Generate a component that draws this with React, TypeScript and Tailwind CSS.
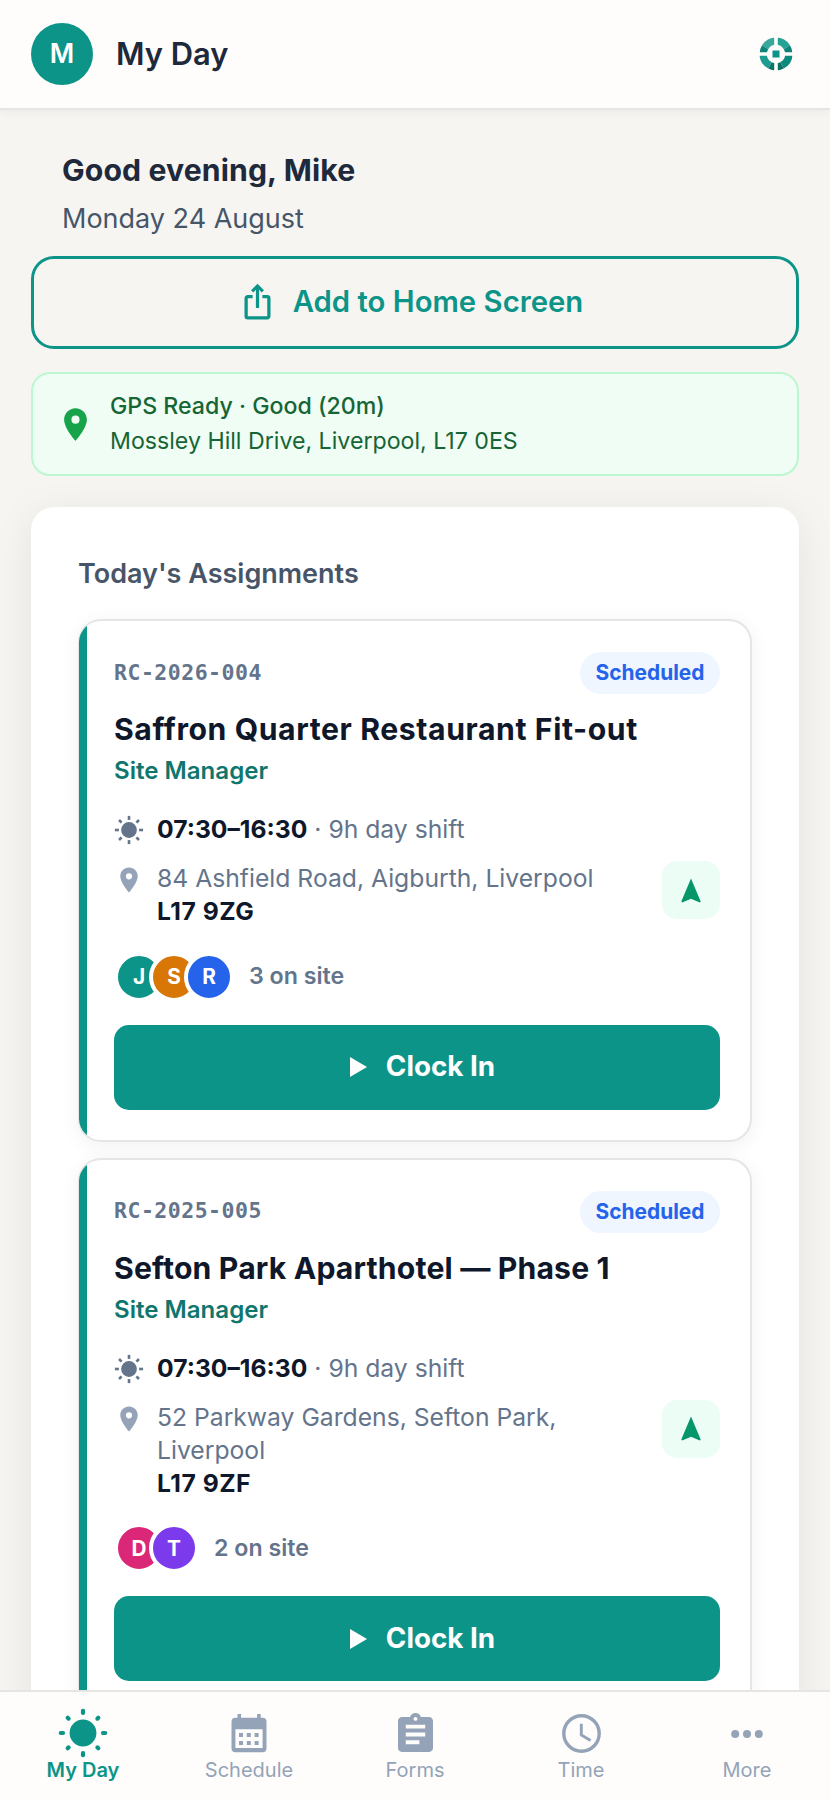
import { MdLocationOn, MdOutlineIosShare } from "react-icons/md";

interface Member {
  initial: string;
  tone: string;
}

interface Assignment {
  ref: string;
  status: string;
  title: string;
  titleSpacing: string;
  role: string;
  time: string;
  shift: string;
  address: string[];
  postcode: string;
  team: Member[];
}

const ASSIGNMENTS: Assignment[] = [
  {
    ref: "RC-2026-004",
    status: "Scheduled",
    title: "Saffron Quarter Restaurant Fit-out",
    titleSpacing: "tracking-[0.58px]",
    role: "Site Manager",
    time: "07:30–16:30",
    shift: "9h day shift",
    address: ["84 Ashfield Road, Aigburth, Liverpool"],
    postcode: "L17 9ZG",
    team: [
      { initial: "J", tone: "bg-[#0d9488]" },
      { initial: "S", tone: "bg-[#d97706]" },
      { initial: "R", tone: "bg-[#2563eb]" },
    ],
  },
  {
    ref: "RC-2025-005",
    status: "Scheduled",
    title: "Sefton Park Aparthotel — Phase 1",
    titleSpacing: "tracking-[0.15px]",
    role: "Site Manager",
    time: "07:30–16:30",
    shift: "9h day shift",
    address: ["52 Parkway Gardens, Sefton Park,", "Liverpool"],
    postcode: "L17 9ZF",
    team: [
      { initial: "D", tone: "bg-[#db2777]" },
      { initial: "T", tone: "bg-[#7c3aed]" },
    ],
  },
];

const RAYS = [0, 45, 90, 135, 180, 225, 270, 315];

function Logo() {
  return (
    <svg viewBox="0 0 34 34" className="w-[34px] h-[34px] mr-[6px]">
      <g fill="none" strokeWidth="7.3">
        <path d="M17 4.15A12.85 12.85 0 0 0 6.1 10.2" stroke="#3aa79d" />
        <path d="M6.1 10.2A12.85 12.85 0 0 0 4.15 17" stroke="#0f8378" />
        <path d="M17 4.15A12.85 12.85 0 0 1 27.9 10.2" stroke="#24a296" />
        <path d="M27.9 10.2A12.85 12.85 0 0 1 29.85 17" stroke="#0f8378" />
        <path d="M4.15 17A12.85 12.85 0 0 0 11 28.35" stroke="#1f9c90" />
        <path d="M11 28.35A12.85 12.85 0 0 0 17 29.85" stroke="#0b7268" />
        <path d="M29.85 17A12.85 12.85 0 0 1 23 28.35" stroke="#0d8a7e" />
        <path d="M23 28.35A12.85 12.85 0 0 1 17 29.85" stroke="#0b7268" />
      </g>
      <path d="M17 0V34M0 17H34" stroke="#fefdfb" strokeWidth="3.6" />
      <rect x="13.5" y="13.5" width="7" height="7" fill="#0d9488" />
    </svg>
  );
}

function SmallSun() {
  return (
    <svg viewBox="0 0 30 30" className="w-[30px] h-[30px] shrink-0 text-[#64748b]">
      <circle cx="15" cy="15" r="7.9" fill="currentColor" />
      {RAYS.map((deg) => (
        <rect
          key={deg}
          x="13.7"
          y="0.9"
          width="2.6"
          height={deg % 90 === 0 ? "4" : "3.6"}
          fill="currentColor"
          transform={`rotate(${deg} 15 15)`}
        />
      ))}
    </svg>
  );
}

function NavSun() {
  return (
    <svg viewBox="0 0 50 50" className="w-[50px] h-[50px]">
      <circle cx="25" cy="25" r="13.4" fill="currentColor" />
      {RAYS.map((deg) => (
        <rect
          key={deg}
          x="22.9"
          y={deg % 90 === 0 ? "0.7" : "1.3"}
          width="4.2"
          height={deg % 90 === 0 ? "6.4" : "5.4"}
          rx="2"
          fill="currentColor"
          transform={`rotate(${deg} 25 25)`}
        />
      ))}
    </svg>
  );
}

function CalendarIcon() {
  return (
    <svg viewBox="0 0 36 40" className="w-[36px] h-[40px]">
      <path
        fill="currentColor"
        fillRule="evenodd"
        d="M6.5 1h3.6v3.8h16V1h3.6v3.8h1.8a4 4 0 0 1 4 4v26.4a4 4 0 0 1-4 4h-27a4 4 0 0 1-4-4V8.8a4 4 0 0 1 4-4h2zM4.4 16.2v18.8h27.2V16.2z"
      />
      {[8, 15.8, 23.6].map((x) => (
        <g key={x} fill="currentColor">
          <rect x={x} y="20" width="4" height="4" />
          <rect x={x} y="28" width="4" height="4" />
        </g>
      ))}
    </svg>
  );
}

function ClipboardIcon() {
  return (
    <svg viewBox="3 1 18 20" className="mb-[2px] w-[35px] h-[39px]">
      <path
        fill="currentColor"
        d="M19 3h-4.18C14.4 1.84 13.3 1 12 1s-2.4.84-2.82 2H5c-1.1 0-2 .9-2 2v14c0 1.1.9 2 2 2h14c1.1 0 2-.9 2-2V5c0-1.1-.9-2-2-2zm-7 0c.55 0 1 .45 1 1s-.45 1-1 1-1-.45-1-1 .45-1 1-1zm2 14H7v-2h7v2zm3-4H7v-2h10v2zm0-4H7V7h10v2z"
      />
    </svg>
  );
}

function ClockIcon() {
  return (
    <svg viewBox="0 0 39 39" className="w-[39px] h-[39px]" fill="none" stroke="currentColor">
      <circle cx="19.5" cy="19.5" r="17.7" strokeWidth="3.4" />
      <path d="M19.3 9.7V21l9.3 5.5" strokeWidth="2.9" />
    </svg>
  );
}

function MoreIcon() {
  return (
    <svg viewBox="0 0 32 8" className="mt-[2px] w-[32px] h-[8px]">
      <circle cx="4.2" cy="4" r="4" fill="currentColor" />
      <circle cx="16" cy="4" r="4" fill="currentColor" />
      <circle cx="27.8" cy="4" r="4" fill="currentColor" />
    </svg>
  );
}

const NAV_ITEMS = [
  { label: "My Day", icon: <NavSun />, active: true },
  { label: "Schedule", icon: <CalendarIcon />, active: false },
  { label: "Forms", icon: <ClipboardIcon />, active: false },
  { label: "Time", icon: <ClockIcon />, active: false },
  { label: "More", icon: <MoreIcon />, active: false },
];

function AssignmentCard({ item }: { item: Assignment }) {
  return (
    <article className="flex shrink-0 overflow-hidden rounded-[23px] border-2 border-l border-[#e7e5e4] bg-white shadow-[0_4px_20px_rgba(0,0,0,0.06)]">
      <div className="w-[8px] shrink-0 bg-[#0d9488]" />
      <div className="flex-1 pl-[27px] pr-[30px] pt-[31px] pb-[30px]">
        <div className="flex h-[42px] items-center justify-between">
          <span className="font-['DejaVu_Sans_Mono',monospace] text-[21.5px] font-bold tracking-[0.5px] text-[#64748b]">
            {item.ref}
          </span>
          <span className="flex h-[42px] w-[140px] items-center justify-center rounded-full bg-[#eff6ff] text-[20.9px] font-bold text-[#2563eb]">
            {item.status}
          </span>
        </div>
        <h3
          className={`mt-[15px] h-[40px] whitespace-nowrap text-[30.2px] font-bold leading-[40px] text-[#0f172a] ${item.titleSpacing}`}
        >
          {item.title}
        </h3>
        <p className="h-[42px] text-[24.1px] font-semibold leading-[44px] text-[#0f766e]">{item.role}</p>
        <div className="mt-[20px] flex h-[38px] items-center gap-[13px] text-[24.7px]">
          <SmallSun />
          <p className="text-[#64748b]">
            <span className="font-bold text-[#0f172a]">{item.time}</span> · {item.shift}
          </p>
        </div>
        <div className="mt-[12px] flex items-start">
          <MdLocationOn className="mt-[4px] h-[30px] w-[30px] shrink-0 text-[#94a3b8]" />
          <div className="ml-[13px] flex-1 pb-px pt-px text-[24.7px] leading-[33.3px] text-[#64748b]">
            {item.address.map((line) => (
              <div key={line}>{line}</div>
            ))}
            <div className="font-bold tracking-[0.5px] text-[#0f172a]">{item.postcode}</div>
          </div>
          <button className="flex h-[58px] w-[58px] items-center justify-center rounded-[15px] bg-[#ecfdf5]">
            <svg viewBox="0 0 20 25" className="w-[20px] h-[25px]">
              <path d="M10 .5 19.7 23.4 18.8 24.4 10 20.8 1.2 24.4.3 23.4Z" fill="#059669" />
            </svg>
          </button>
        </div>
        <div className="mt-[22px] flex h-[50px] items-center">
          <div className="flex">
            {item.team.map((member, i) => (
              <span
                key={member.initial}
                className={`flex h-[50px] w-[50px] items-center justify-center rounded-full border-4 border-white text-[20.8px] font-bold text-white ${member.tone} ${i > 0 ? "-ml-[15px]" : ""}`}
              >
                {member.initial}
              </span>
            ))}
          </div>
          <span className="ml-[15px] text-[23.2px] font-semibold text-[#64748b]">{item.team.length} on site</span>
        </div>
        <button className="mt-[23px] flex h-[85px] w-full items-center justify-center rounded-[15px] bg-[#0d9488] pl-[11px] text-[27.8px] font-bold text-white">
          <svg viewBox="0 0 17 20" className="mr-[19px] h-[20px] w-[17px]">
            <path d="M0 0 17 10 0 20Z" fill="currentColor" />
          </svg>
          Clock In
        </button>
      </div>
    </article>
  );
}

export default function App() {
  return (
    <div className="flex h-[1800px] w-[830px] flex-col overflow-hidden bg-[#f7f5f2] font-['Inter',sans-serif]">
      <header className="z-10 flex h-[110px] shrink-0 items-center border-b-2 border-[#e7e5e4] bg-[#fefdfb] px-[31px] shadow-[0_2px_8px_rgba(0,0,0,0.05)]">
        <span className="flex h-[62px] w-[62px] items-center justify-center rounded-full bg-[#0d9488] text-[26.5px] font-semibold text-white">
          M
        </span>
        <h1 className="ml-[23px] flex-1 text-[30.9px] font-semibold text-[#1e293b]">My Day</h1>
        <Logo />
      </header>

      <main className="flex min-h-0 flex-1 flex-col overflow-hidden px-[31px]">
        <div className="h-[146px] shrink-0 px-[31px] pt-[40px]">
          <h2 className="text-[30.2px] font-bold leading-[40px] tracking-[0.12px] text-[#1e293b]">Good evening, Mike</h2>
          <p className="mt-[9px] text-[27px] leading-[40px] text-[#475569]">Monday 24 August</p>
        </div>
        <button className="flex h-[93px] shrink-0 items-center justify-center rounded-[23px] border-3 border-[#0d9488] pb-[2px] pr-[9px] text-[29.3px] font-semibold text-[#0d9488]">
          <MdOutlineIosShare className="mr-[16px] h-[39px] w-[39px]" />
          Add to Home Screen
        </button>
        <div className="mt-[23px] flex h-[104px] shrink-0 items-center rounded-[19px] border-2 border-[#bbf7d0] bg-[#f0fdf4] pl-[23px]">
          <MdLocationOn className="h-[39px] w-[39px] text-[#16a34a]" />
          <div className="ml-[15px] text-[23.16px] leading-[35px] text-[#166534]">
            <p className="font-medium">GPS Ready · Good (20m)</p>
            <p>Mossley Hill Drive, Liverpool, L17 0ES</p>
          </div>
        </div>
        <section className="mt-[31px] flex shrink-0 flex-col gap-[16px] rounded-[23px] bg-white px-[47px] pt-[47px] pb-[47px] shadow-[0_8px_40px_rgba(0,0,0,0.08)]">
          <h2 className="mb-[10px] h-[39px] text-[27px] font-semibold leading-[40px] text-[#475569]">
            Today's Assignments
          </h2>
          {ASSIGNMENTS.map((item) => (
            <AssignmentCard key={item.ref} item={item} />
          ))}
        </section>
      </main>

      <nav className="z-10 grid h-[110px] shrink-0 grid-cols-5 border-t-2 border-[#e7e5e4] bg-[#fefdfb]">
        {NAV_ITEMS.map((item) => (
          <div
            key={item.label}
            className={`flex flex-col items-center pt-[16px] text-[20px] ${
              item.active ? "font-semibold text-[#0d9488]" : "text-[#94a3b8]"
            }`}
          >
            <div className="flex h-[50px] items-center justify-center">{item.icon}</div>
            <span className="leading-[24px]">{item.label}</span>
          </div>
        ))}
      </nav>
    </div>
  );
}
